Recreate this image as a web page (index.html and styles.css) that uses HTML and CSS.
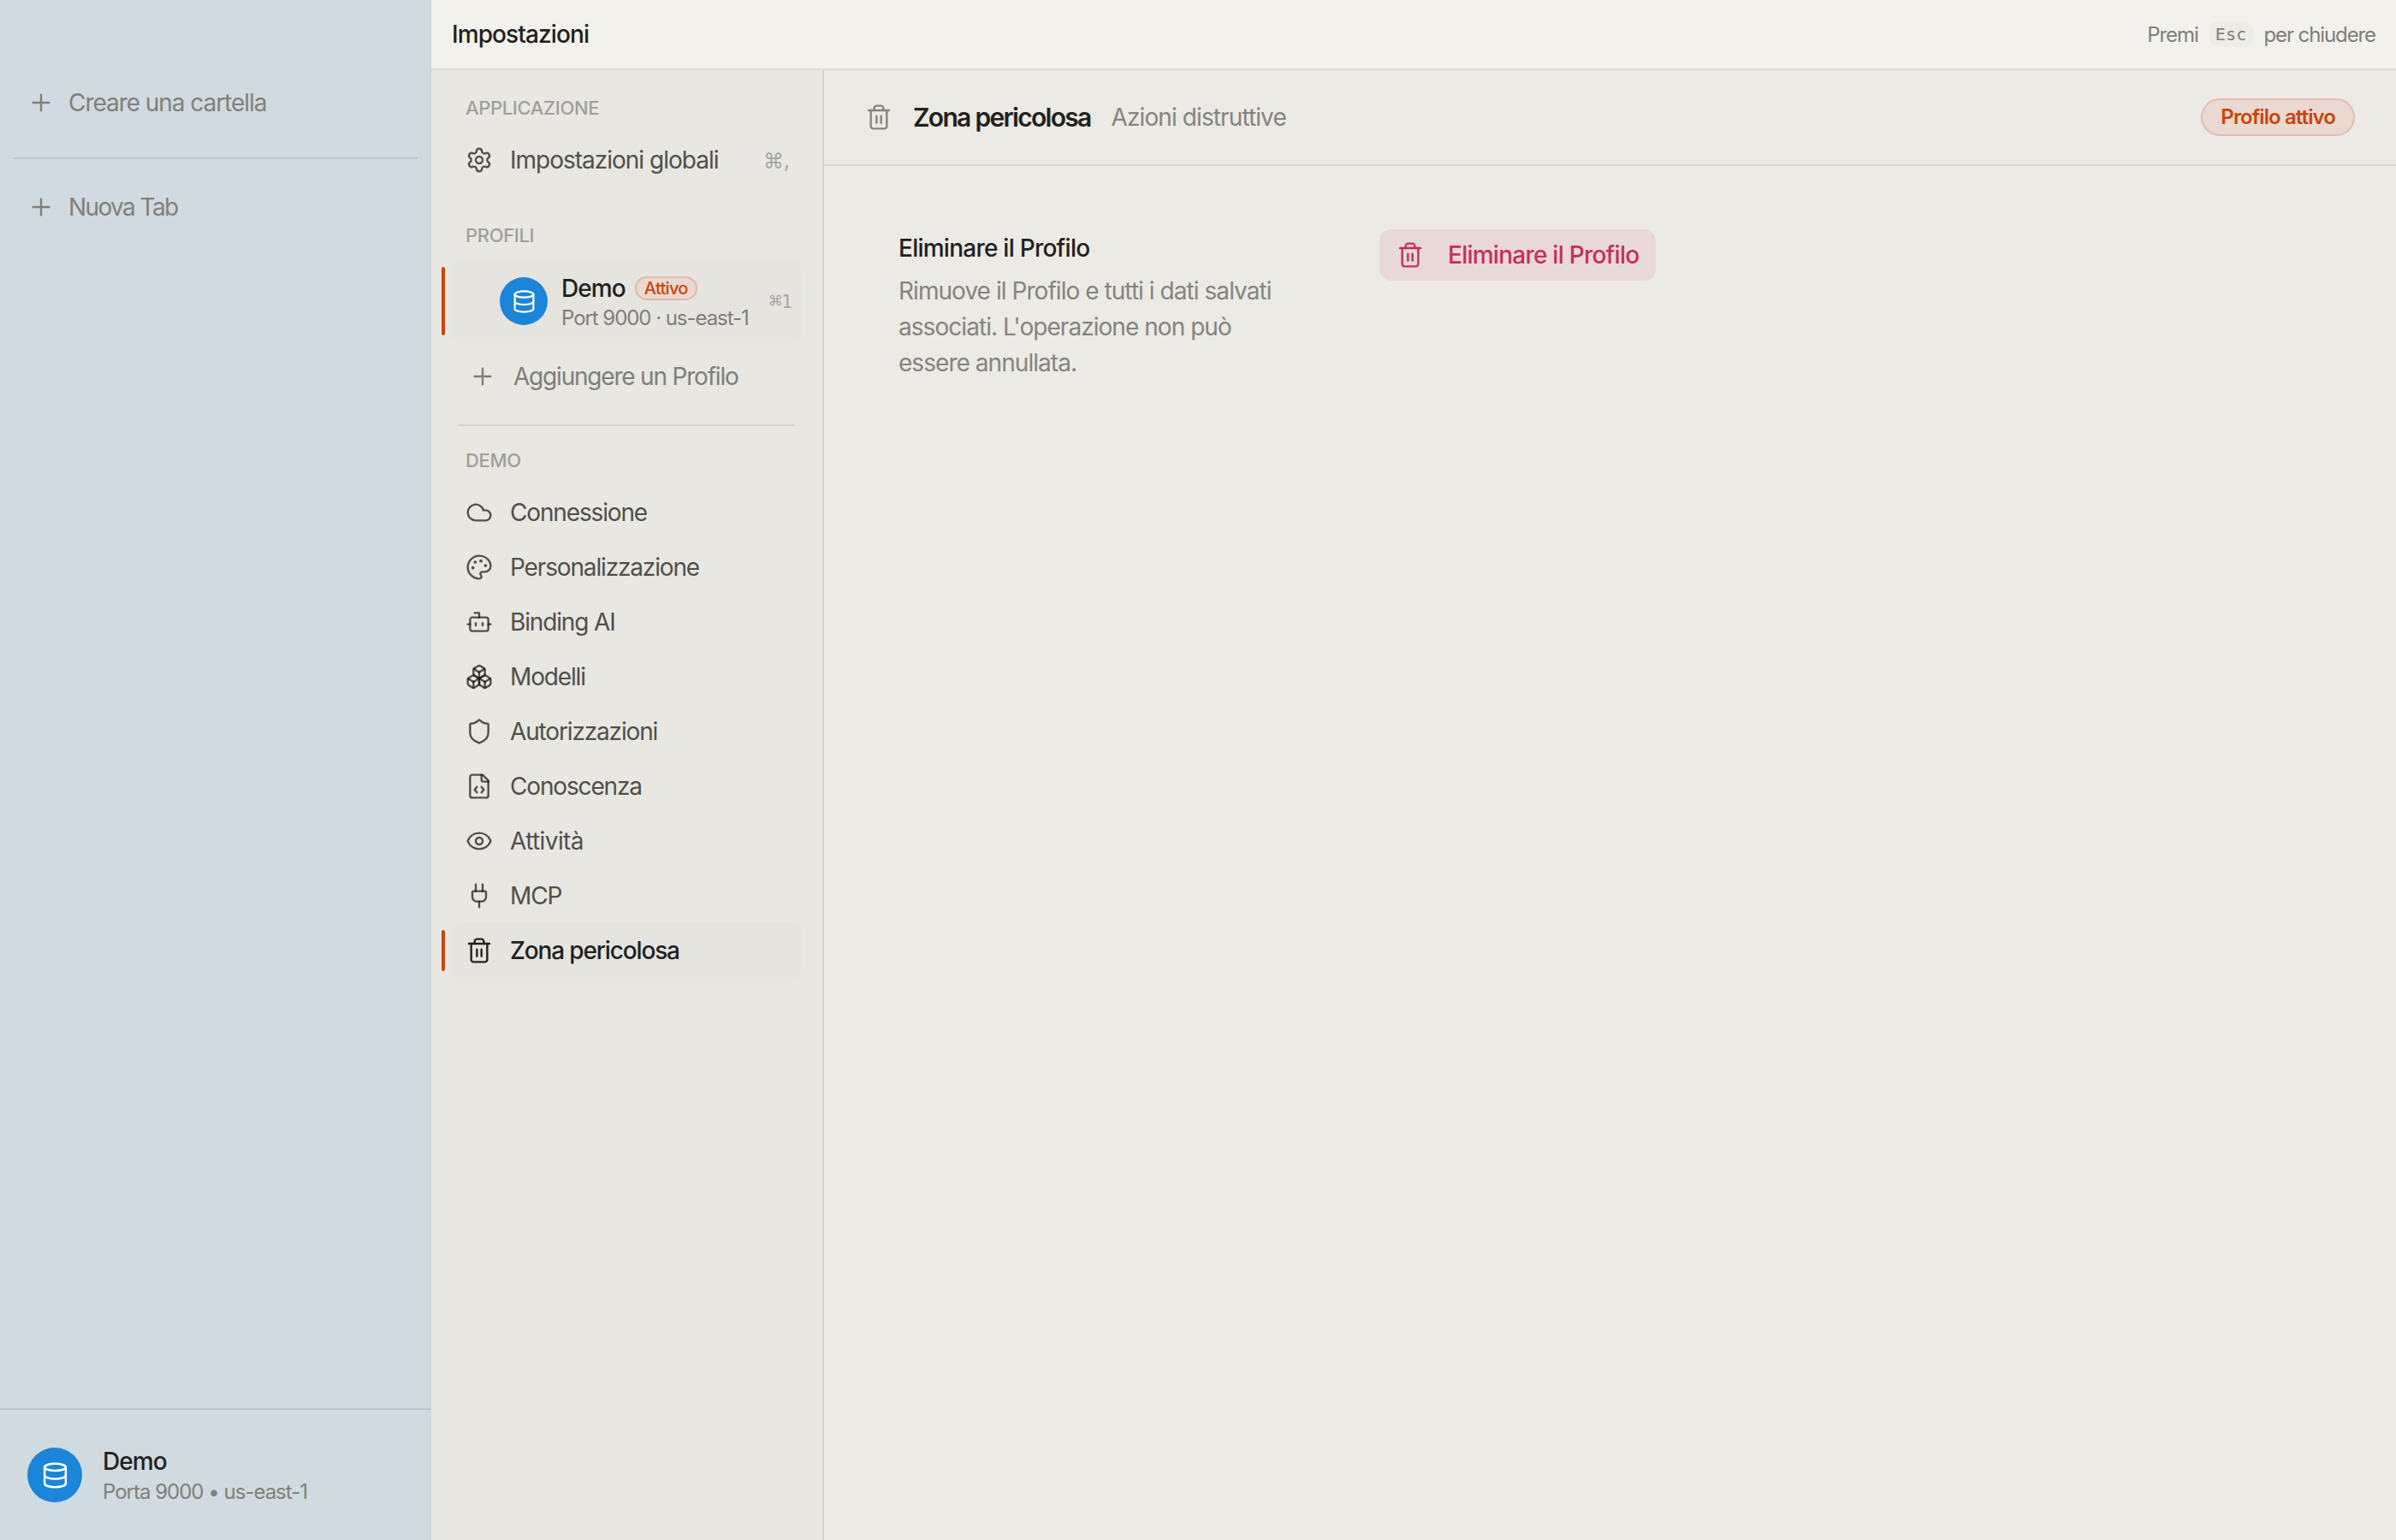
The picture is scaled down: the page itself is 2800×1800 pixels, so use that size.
FILE: index.html
```
<!DOCTYPE html>
<html lang="it">
<head>
    <meta charset="UTF-8">
    <meta name="viewport" content="width=device-width, initial-scale=1.0">
    <title>Impostazioni</title>
    <link rel="stylesheet" href="styles.css">
</head>
<body>
    <aside class="sidebar">
        <div class="folders">
            <button class="side-btn">
                <svg class="icon" viewBox="0 0 24 24"><path d="M5 12h14"/><path d="M12 5v14"/></svg>
                <span>Creare una cartella</span>
            </button>
        </div>
        <div class="tabs">
            <button class="side-btn new-tab">
                <svg class="icon" viewBox="0 0 24 24"><path d="M5 12h14"/><path d="M12 5v14"/></svg>
                <span>Nuova Tab</span>
            </button>
        </div>
        <div class="account">
            <div class="avatar avatar-lg">
                <svg class="icon" viewBox="0 0 24 24"><ellipse cx="12" cy="5" rx="9" ry="3"/><path d="M3 5V19A9 3 0 0 0 21 19V5"/><path d="M3 12A9 3 0 0 0 21 12"/></svg>
            </div>
            <div class="account-info">
                <div class="account-name">Demo</div>
                <div class="account-sub">Porta 9000 • us-east-1</div>
            </div>
        </div>
    </aside>

    <div class="settings">
        <header class="topbar">
            <h1>Impostazioni</h1>
            <div class="hint"><span class="hint-press">Premi</span><kbd>Esc</kbd><span class="hint-close">per chiudere</span></div>
        </header>

        <div class="content">
            <nav class="nav">
                <div class="nav-label">APPLICAZIONE</div>
                <a class="nav-item global">
                    <svg class="icon" viewBox="0 0 24 24"><path d="M9.671 4.136a2.34 2.34 0 0 1 4.659 0 2.34 2.34 0 0 0 3.319 1.915 2.34 2.34 0 0 1 2.33 4.033 2.34 2.34 0 0 0 0 3.831 2.34 2.34 0 0 1-2.33 4.033 2.34 2.34 0 0 0-3.319 1.915 2.34 2.34 0 0 1-4.659 0 2.34 2.34 0 0 0-3.32-1.915 2.34 2.34 0 0 1-2.33-4.033 2.34 2.34 0 0 0 0-3.831A2.34 2.34 0 0 1 6.35 6.051a2.34 2.34 0 0 0 3.319-1.915"/><circle cx="12" cy="12" r="3"/></svg>
                    <span>Impostazioni globali</span>
                    <span class="shortcut">⌘,</span>
                </a>

                <div class="nav-label profiles-label">PROFILI</div>
                <a class="profile selected">
                    <div class="avatar">
                        <svg class="icon" viewBox="0 0 24 24"><ellipse cx="12" cy="5" rx="9" ry="3"/><path d="M3 5V19A9 3 0 0 0 21 19V5"/><path d="M3 12A9 3 0 0 0 21 12"/></svg>
                    </div>
                    <div class="profile-info">
                        <div class="profile-name"><span>Demo</span><span class="badge">Attivo</span></div>
                        <div class="profile-sub">Port 9000 · us-east-1</div>
                    </div>
                    <span class="shortcut mono"><span class="cmd">⌘</span>1</span>
                </a>
                <a class="add-profile">
                    <svg class="icon" viewBox="0 0 24 24"><path d="M5 12h14"/><path d="M12 5v14"/></svg>
                    <span>Aggiungere un Profilo</span>
                </a>

                <hr class="nav-divider">

                <div class="nav-label">DEMO</div>
                <a class="nav-item">
                    <svg class="icon" viewBox="0 0 24 24"><path d="M17.5 19H9a7 7 0 1 1 6.71-9h1.79a4.5 4.5 0 1 1 0 9Z"/></svg>
                    <span>Connessione</span>
                </a>
                <a class="nav-item">
                    <svg class="icon" viewBox="0 0 24 24"><path d="M12 22a1 1 0 0 1 0-20 10 9 0 0 1 10 9 5 5 0 0 1-5 5h-2.25a1.75 1.75 0 0 0-1.4 2.8l.3.4a1.75 1.75 0 0 1-1.4 2.8z"/><g class="dots"><circle cx="13.5" cy="6.5" r="1.4"/><circle cx="17.5" cy="10.5" r="1.4"/><circle cx="6.5" cy="12.5" r="1.4"/><circle cx="8.5" cy="7.5" r="1.4"/></g></svg>
                    <span>Personalizzazione</span>
                </a>
                <a class="nav-item">
                    <svg class="icon" viewBox="0 0 24 24"><path d="M12 8V4H8"/><rect x="4" y="8" width="16" height="12" rx="2"/><path d="M2 14h2"/><path d="M20 14h2"/><path d="M15 13v2"/><path d="M9 13v2"/></svg>
                    <span>Binding AI</span>
                </a>
                <a class="nav-item">
                    <svg class="icon" viewBox="0 0 24 24"><path d="M2.97 12.92A2 2 0 0 0 2 14.63v3.24a2 2 0 0 0 .97 1.71l3 1.8a2 2 0 0 0 2.06 0L12 19v-5.5l-5-3-4.03 2.42Z"/><path d="m7 16.5-4.74-2.85"/><path d="m7 16.5 5-3"/><path d="M7 16.5v5.17"/><path d="M12 13.5V19l3.97 2.38a2 2 0 0 0 2.06 0l3-1.8a2 2 0 0 0 .97-1.71v-3.24a2 2 0 0 0-.97-1.71L17 10.5l-5 3Z"/><path d="m17 16.5-5-3"/><path d="m17 16.5 4.74-2.85"/><path d="M17 16.5v5.17"/><path d="M7.97 4.42A2 2 0 0 0 7 6.13v4.37l5 3 5-3V6.13a2 2 0 0 0-.97-1.71l-3-1.8a2 2 0 0 0-2.06 0l-3 1.8Z"/><path d="M12 8 7.26 5.15"/><path d="m12 8 4.74-2.85"/><path d="M12 13.5V8"/></svg>
                    <span>Modelli</span>
                </a>
                <a class="nav-item">
                    <svg class="icon" viewBox="0 0 24 24"><path d="M20 13c0 5-3.5 7.5-7.66 8.95a1 1 0 0 1-.67-.01C7.5 20.5 4 18 4 13V6a1 1 0 0 1 1-1c2 0 4.5-1.2 6.24-2.72a1.17 1.17 0 0 1 1.52 0C14.51 3.81 17 5 19 5a1 1 0 0 1 1 1z"/></svg>
                    <span>Autorizzazioni</span>
                </a>
                <a class="nav-item">
                    <svg class="icon" viewBox="0 0 24 24"><path d="M10 12.5 8 15l2 2.5"/><path d="m14 12.5 2 2.5-2 2.5"/><path d="M14 2v4a2 2 0 0 0 2 2h4"/><path d="M15 2H6a2 2 0 0 0-2 2v16a2 2 0 0 0 2 2h12a2 2 0 0 0 2-2V7z"/></svg>
                    <span>Conoscenza</span>
                </a>
                <a class="nav-item activity">
                    <svg class="icon" viewBox="0 0 24 24"><path d="M2.062 12.348a1 1 0 0 1 0-.696 10.75 10.75 0 0 1 19.876 0 1 1 0 0 1 0 .696 10.75 10.75 0 0 1-19.876 0"/><circle cx="12" cy="12" r="3"/></svg>
                    <span>Attività</span>
                </a>
                <a class="nav-item">
                    <svg class="icon" viewBox="0 0 24 24"><path d="M12 22v-5"/><path d="M15 8V2"/><path d="M17 8a1 1 0 0 1 1 1v4a4 4 0 0 1-4 4h-4a4 4 0 0 1-4-4V9a1 1 0 0 1 1-1z"/><path d="M9 8V2"/></svg>
                    <span>MCP</span>
                </a>
                <a class="nav-item selected">
                    <svg class="icon" viewBox="0 0 24 24"><path d="M3 6h18"/><path d="M19 6v14c0 1-1 2-2 2H7c-1 0-2-1-2-2V6"/><path d="M8 6V4c0-1 1-2 2-2h4c1 0 2 1 2 2v2"/><path d="M10 11v6"/><path d="M14 11v6"/></svg>
                    <span>Zona pericolosa</span>
                </a>
            </nav>

            <main class="panel">
                <div class="panel-header">
                    <svg class="icon" viewBox="0 0 24 24"><path d="M3 6h18"/><path d="M19 6v14c0 1-1 2-2 2H7c-1 0-2-1-2-2V6"/><path d="M8 6V4c0-1 1-2 2-2h4c1 0 2 1 2 2v2"/><path d="M10 11v6"/><path d="M14 11v6"/></svg>
                    <h2>Zona pericolosa</h2>
                    <span class="subtitle">Azioni distruttive</span>
                    <span class="badge badge-lg">Profilo attivo</span>
                </div>
                <section class="setting">
                    <div class="setting-text">
                        <h3>Eliminare il Profilo</h3>
                        <p>Rimuove il Profilo e tutti i dati salvati associati. L'operazione non può essere annullata.</p>
                    </div>
                    <button class="delete-btn">
                        <svg class="icon" viewBox="0 0 24 24"><path d="M3 6h18"/><path d="M19 6v14c0 1-1 2-2 2H7c-1 0-2-1-2-2V6"/><path d="M8 6V4c0-1 1-2 2-2h4c1 0 2 1 2 2v2"/><path d="M10 11v6"/><path d="M14 11v6"/></svg>
                        <span>Eliminare il Profilo</span>
                    </button>
                </section>
            </main>
        </div>
    </div>
</body>
</html>
```
FILE: styles.css
```
* {
    box-sizing: border-box;
}

body {
    margin: 0;
    display: flex;
    height: 100vh;
    overflow: hidden;
    background-color: #ebeae5;
    color: #22211d;
    font-family: Inter, "Liberation Sans", sans-serif;
    font-size: 28px;
    letter-spacing: -1.05px;
    white-space: nowrap;
}

h1, h2, h3, p {
    margin: 0;
}

button {
    border: none;
    background: none;
    padding: 0;
    font: inherit;
    letter-spacing: inherit;
    color: inherit;
    cursor: pointer;
}

.icon {
    width: 32px;
    height: 32px;
    flex-shrink: 0;
    fill: none;
    stroke: currentColor;
    stroke-width: 1.8;
    stroke-linecap: round;
    stroke-linejoin: round;
}

/* left sidebar */
.sidebar {
    width: 504px;
    flex-shrink: 0;
    display: flex;
    flex-direction: column;
    background-color: #cfdae1;
    color: #7f8179;
}

.folders {
    height: 186px;
    margin: 0 16px;
    padding-top: 88px;
    border-bottom: 2px solid #bcc6d1;
}

.tabs {
    flex: 1;
    margin: 0 16px;
    padding-top: 24px;
}

.side-btn {
    display: flex;
    align-items: center;
    gap: 16px;
    height: 64px;
    padding-left: 16px;
}

.new-tab {
    letter-spacing: -1.6px;
}

.account {
    height: 154px;
    display: flex;
    align-items: center;
    gap: 24px;
    padding-left: 32px;
    border-top: 2px solid #bcc6d1;
}

.account-info {
    padding-top: 4px;
}

.avatar {
    width: 56px;
    height: 56px;
    flex-shrink: 0;
    display: flex;
    align-items: center;
    justify-content: center;
    border-radius: 50%;
    background-color: #1b86d9;
    color: #fff;
}

.avatar .icon {
    width: 29px;
    height: 29px;
}

.avatar-lg {
    width: 64px;
    height: 64px;
}

.avatar-lg .icon {
    width: 33px;
    height: 33px;
}

.account-name {
    line-height: 36px;
    font-weight: 500;
    letter-spacing: -0.9px;
    color: #22211d;
}

.account-sub {
    line-height: 36px;
    font-size: 24px;
    letter-spacing: -1px;
}

/* settings window */
.settings {
    flex: 1;
    display: flex;
    flex-direction: column;
}

.topbar {
    height: 82px;
    display: flex;
    align-items: center;
    justify-content: space-between;
    padding: 0 24px;
    background-color: #f2f1ec;
    border-bottom: 2px solid #dddcd7;
}

.topbar h1 {
    font-size: 28px;
    font-weight: 500;
    letter-spacing: -0.9px;
}

.hint {
    display: flex;
    align-items: center;
    font-size: 24px;
    color: #7f7e78;
}

.hint-close {
    letter-spacing: -1.1px;
}

kbd {
    height: 30px;
    margin: 0 13px;
    padding: 0 7px;
    border-radius: 10px;
    background-color: #ecebe6;
    font: 20px/30px "DejaVu Sans Mono", monospace;
    letter-spacing: 0.2px;
}

.content {
    flex: 1;
    display: flex;
}

.nav {
    width: 459px;
    flex-shrink: 0;
    padding: 15px 25px 0 24px;
    background-color: #e8e7e2;
    border-right: 2px solid #d5d4d0;
    color: #504f49;
}

.nav-label {
    height: 58px;
    padding-left: 16px;
    line-height: 58px;
    font-size: 22px;
    font-weight: 500;
    letter-spacing: -0.35px;
    color: #a09f99;
}

.profiles-label {
    margin-top: 27px;
}

.nav-item {
    position: relative;
    display: flex;
    align-items: center;
    gap: 20px;
    height: 64px;
    padding: 0 16px;
    border-radius: 12px;
    letter-spacing: -1.15px;
}

/* translucent strokes, so crossing lines come out darker */
.nav-item .icon {
    color: rgba(24, 23, 18, 0.73);
}

.nav-item.selected .icon {
    color: #22211d;
}

.nav-item.global {
    padding-right: 13px;
    letter-spacing: -1px;
}

.nav-item.activity {
    letter-spacing: -0.6px;
}

.shortcut {
    margin-left: auto;
    font-size: 24px;
    font-weight: 400;
    letter-spacing: 0;
    color: #a6a5a0;
}

.shortcut.mono {
    font-family: "DejaVu Sans Mono", monospace;
    font-size: 21px;
}

.shortcut .cmd {
    font-size: 24px;
}

.selected {
    background-color: #e5e4df;
    font-weight: 500;
    color: #22211d;
}

/* orange marker at the left edge of the nav */
.selected::before {
    content: "";
    position: absolute;
    left: -12px;
    top: 8px;
    bottom: 8px;
    width: 4px;
    border-radius: 2px;
    background-color: #c9450a;
}

.profile {
    position: relative;
    display: flex;
    align-items: center;
    height: 96px;
    padding: 0 10px 0 56px;
    border-radius: 12px;
}

.profile-info {
    margin-left: 16px;
    padding-top: 3px;
}

.profile-name {
    display: flex;
    align-items: center;
    gap: 11px;
    height: 36px;
    letter-spacing: -0.9px;
}

.profile-sub {
    line-height: 34px;
    font-size: 24px;
    font-weight: 400;
    letter-spacing: -1.05px;
    color: #7f7e78;
}

.badge {
    height: 28px;
    padding: 0 9px;
    border: 2px solid #e6b9ab;
    border-radius: 14px;
    background-color: #e9d9d0;
    font-size: 20px;
    font-weight: 500;
    line-height: 24px;
    letter-spacing: -0.7px;
    color: #c9450a;
}

.add-profile {
    display: flex;
    align-items: center;
    gap: 20px;
    height: 64px;
    margin-top: 8px;
    padding-left: 20px;
    letter-spacing: -1.2px;
    color: #7f7e78;
}

.nav-divider {
    height: 2px;
    margin: 24px 7px 11px 8px;
    border: none;
    background-color: #d5d4d0;
}

.dots circle {
    fill: currentColor;
    stroke: none;
}

/* right panel */
.panel {
    flex: 1;
}

.panel-header {
    display: flex;
    align-items: center;
    height: 112px;
    padding: 0 48px;
    border-bottom: 2px solid #d8d7d3;
}

.panel-header .icon {
    color: #85847d;
}

.panel-header h2 {
    margin-left: 24px;
    font-size: 30px;
    font-weight: 600;
    letter-spacing: -1.7px;
}

.subtitle {
    margin-left: 24px;
    letter-spacing: -0.9px;
    color: #85847d;
}

.badge-lg {
    height: 44px;
    margin-left: auto;
    padding: 0 21px;
    border-radius: 22px;
    border-color: #e3bcb2;
    font-size: 24px;
    font-weight: 600;
    line-height: 40px;
    letter-spacing: -0.9px;
}

.setting {
    display: flex;
    align-items: flex-start;
    gap: 112px;
    padding: 74px 0 0 87px;
}

.setting-text {
    width: 450px;
}

.setting-text h3 {
    height: 44px;
    line-height: 44px;
    font-size: 28px;
    font-weight: 500;
    letter-spacing: -0.75px;
}

.setting-text p {
    margin-top: 7px;
    line-height: 42px;
    letter-spacing: -0.95px;
    white-space: normal;
    color: #85847d;
}

.delete-btn {
    display: flex;
    align-items: center;
    gap: 28px;
    height: 60px;
    padding: 0 20px;
    border-radius: 14px;
    background-color: #e8d8d8;
    color: #c62f5a;
    font-weight: 500;
    letter-spacing: -0.75px;
}
```
